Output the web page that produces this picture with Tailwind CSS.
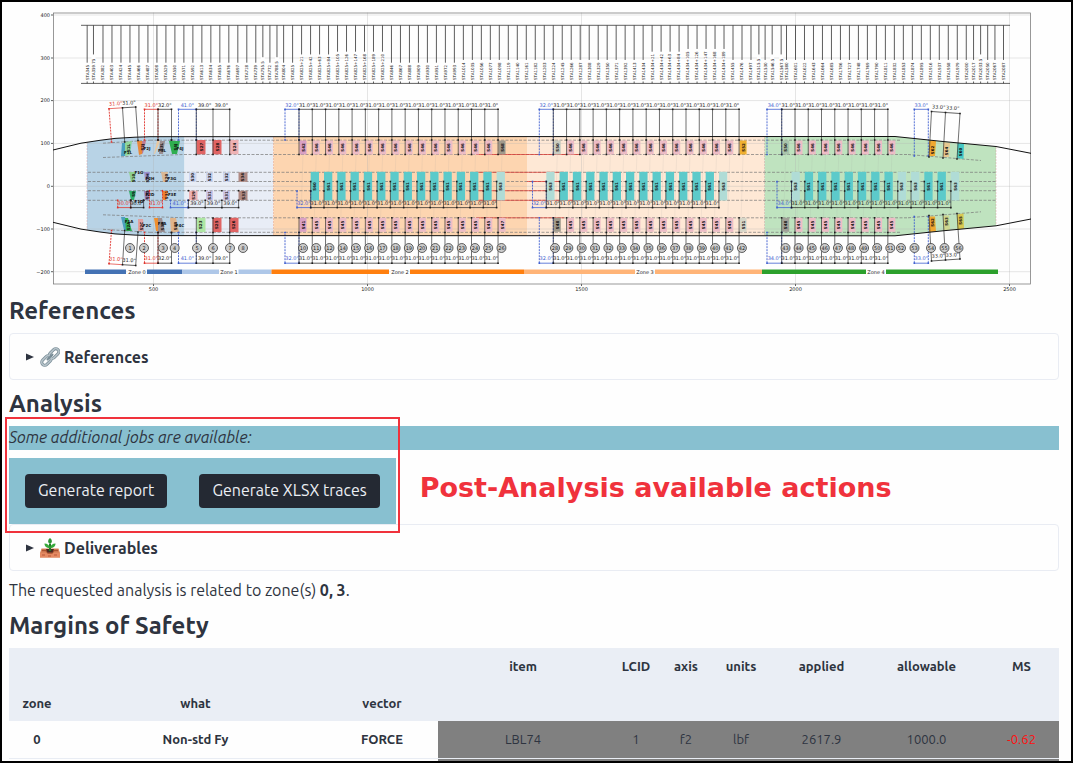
<!DOCTYPE html>
<html lang="en">
<head>
    <meta charset="UTF-8">
    <meta name="viewport" content="width=device-width, initial-scale=1.0">
    <title>Analysis results</title>
    <script src="https://cdn.jsdelivr.net/npm/@tailwindcss/browser@4"></script>
</head>
<body class="h-screen overflow-hidden border-2 border-black bg-[#fefefe] pl-[7px] pr-3 font-['Ubuntu','Noto_Sans',sans-serif] text-base text-[#2e3440]">
    <!-- Station chart -->
    <svg id="chart" class="block w-full" viewBox="18 4 2100 580" role="img" aria-label="Stations and zones" font-family="DejaVu Sans, sans-serif"></svg>

    <main>
        <h2 class="mt-[3px] mb-[6px] text-2xl leading-8 font-bold">References</h2>
        <details class="rounded border border-[#e9ecf3] px-4 pt-[11px] pb-[10px]">
            <summary class="flex cursor-pointer list-none items-center font-bold">
                <svg class="mr-[6px] h-2 w-2" viewBox="0 0 8 8"><path d="M0 .5 8 4 0 7.500z" fill="#2e3440"/></svg>
                <svg class="mr-1 h-5 w-5" viewBox="0 0 20 20" fill="none">
                    <g stroke="#788c96" stroke-width="3">
                        <rect x="8.500" y="3.500" width="11" height="6" rx="3" transform="rotate(-45 14 6.500)"/>
                        <rect x="1" y="10.500" width="11" height="6" rx="3" transform="rotate(-45 6.500 13.500)"/>
                    </g>
                    <g stroke="#b5c2c9" stroke-width="1.500">
                        <rect x="8.500" y="3.500" width="11" height="6" rx="3" transform="rotate(-45 14 6.500)"/>
                        <rect x="1" y="10.500" width="11" height="6" rx="3" transform="rotate(-45 6.500 13.500)"/>
                    </g>
                    <path d="M7.500 12.500l5-5" stroke="#788c96" stroke-width="2" stroke-linecap="round"/>
                </svg>
                References
            </summary>
        </details>

        <h2 class="mt-2 mb-[6px] text-2xl leading-8 font-bold">Analysis</h2>
        <!-- Additional jobs -->
        <section class="relative">
            <p class="mb-2 bg-[#88c0d0] pb-0.5 leading-[22px] italic">Some additional jobs are available:</p>
            <div class="flex items-center">
                <div class="flex shrink-0 gap-8 bg-[#88c0d0] p-4">
                    <button type="button" class="h-[34px] rounded bg-[#242933] px-[13px] pb-0.5 text-[#eceff4]">Generate report</button>
                    <button type="button" class="h-[34px] rounded bg-[#242933] px-[13px] pb-0.5 text-[#eceff4]">Generate XLSX traces</button>
                </div>
                <p class="pb-[6px] pl-6 font-['DejaVu_Sans',sans-serif] text-[27px] leading-8 font-bold whitespace-nowrap text-[#f0323c]">Post-Analysis available actions</p>
            </div>
            <div class="pointer-events-none absolute -top-[9px] -bottom-[9px] -left-1 w-[395px] border-2 border-[#f0323c]"></div>
        </section>

        <details class="rounded border border-[#e9ecf3] px-4 pt-[11px] pb-[10px]">
            <summary class="flex cursor-pointer list-none items-center font-bold">
                <svg class="mr-[6px] h-2 w-2" viewBox="0 0 8 8"><path d="M0 .5 8 4 0 7.500z" fill="#2e3440"/></svg>
                <svg class="mr-1 h-5 w-5" viewBox="0 0 20 20">
                    <path d="M1.500 10.500h17L20 15v4.500H0V15z" fill="#d9825a"/>
                    <path d="M0 15h20v4.500H0z" fill="#e58a63"/>
                    <path d="M2 12.500h4l2 2.500h4l2-2.500h4" fill="none" stroke="#a6502f" stroke-width="1.500"/>
                    <path d="M6 11h8l-1.500 3.500h-5z" fill="#4a2a22"/>
                    <path d="M10 13V6" stroke="#207a28" stroke-width="2"/>
                    <path d="M10 10C6 10 4.500 8 4.500 5.500 7.500 5.500 9.500 7 10 10zM10 10c4 0 5.500-2 5.500-4.500C12.500 5.500 10.500 7 10 10z" fill="#37a93c"/>
                    <path d="M10 6C7.500 4.500 7.500 2 10 0c2.500 2 2.500 4.500 0 6z" fill="#2c9434"/>
                    <path d="M2 17h3M8 18h3M14 17h3" stroke="#b9583a"/>
                </svg>
                Deliverables
            </summary>
        </details>

        <p class="mt-[7px]">The requested analysis is related to zone(s) <b>0, 3</b>.</p>

        <h2 class="mt-2 mb-[6px] text-2xl leading-8 font-bold">Margins of Safety</h2>
        <table class="w-full table-fixed border-collapse text-center text-[13px] leading-5">
            <colgroup>
                <col class="w-[56px]"><col class="w-[261px]"><col class="w-[112px]"><col class="w-[170px]"><col class="w-[56px]">
                <col class="w-[44px]"><col class="w-[66px]"><col class="w-[95px]"><col class="w-[115px]"><col class="w-[75px]">
            </colgroup>
            <thead class="bg-[#eaeef5]">
                <tr class="h-[36px]">
                    <th colspan="3"></th>
                    <th>item</th><th>LCID</th><th>axis</th><th>units</th><th>applied</th><th>allowable</th><th>MS</th>
                </tr>
                <tr class="h-[37px]">
                    <th>zone</th><th>what</th><th>vector</th><th colspan="7"></th>
                </tr>
            </thead>
            <tbody>
                <tr class="h-[37px] border-b border-[#e9edf4]">
                    <th>0</th><th>Non-std Fy</th><th>FORCE</th>
                    <td class="bg-[#808080]">LBL74</td>
                    <td class="bg-[#808080]">1</td>
                    <td class="bg-[#808080]">f2</td>
                    <td class="bg-[#808080]">lbf</td>
                    <td class="bg-[#808080]">2617.9</td>
                    <td class="bg-[#808080]">1000.0</td>
                    <td class="bg-[#808080] text-[#ff1010]">-0.62</td>
                </tr>
                <tr class="h-[37px]">
                    <th colspan="3"></th>
                    <td colspan="7" class="bg-[#808080]"></td>
                </tr>
            </tbody>
        </table>
    </main>

    <script>
        // the drawing uses two user units per chart unit
        const K = 2;
        const out = [];
        const RED = '#e0332c', BLUE = '#3f5fd0', BLACK = '#1c1c1c';

        function line(x1, y1, x2, y2, color, width = 0.7, dash = '') {
            out.push(`<path d="M${x1 * K} ${y1 * K}L${x2 * K} ${y2 * K}" stroke="${color}" stroke-width="${width * K}" stroke-dasharray="${dash || 'none'}" fill="none"/>`);
        }
        function poly(points, fill) {
            out.push(`<polygon points="${points.map(p => p[0] * K + ',' + p[1] * K).join(' ')}" fill="${fill}"/>`);
        }
        function box(x, y, w, h, fill) {
            poly([[x, y], [x + w, y], [x + w, y + h], [x, y + h]], fill);
        }
        function text(s, x, y, size, color = BLACK, rotate = 0, anchor = 'middle', weight = 'normal') {
            out.push(`<text x="${x * K}" y="${y * K}" font-size="${size}" fill="${color}" text-anchor="${anchor}" font-weight="${weight}" transform="rotate(${rotate} ${x * K} ${y * K})">${s}</text>`);
        }
        function dot(x, y, color) {
            box(x - 0.8, y - 0.8, 1.6, 1.6, color);
        }
        function tag(s, x, y) {
            text(s, x + 1.5, y, 8, '#111', -90, 'middle', 'bold');
        }
        const stationX = d => -60.5 + 0.428 * d;

        // zones
        const hullTop = [[53, 150], [81, 143.2], [100, 140.3], [115, 138.4], [135, 137.2], [150, 136.7], [895, 136.5], [943, 141.5], [996, 146.5], [1031, 153.3]];
        const hullBottom = hullTop.map(([x, y]) => [x, 372.3 - y]);
        out.push('<defs><clipPath id="hull"><polygon points="' + hullTop.concat(hullBottom.slice().reverse()).map(p => p[0] * K + ',' + p[1] * K).join(' ') + '"/></clipPath></defs><g clip-path="url(#hull)">');
        [[87, 184.5, '#b8d3e6'], [184.5, 273.5, '#e8edf6'], [273.5, 527, '#fdd5b0'], [527, 764.5, '#fee8d5'], [764.5, 996, '#bfe3bf']]
            .forEach(([a, b, c]) => box(a, 130, b - a, 112, c));
        out.push('</g>');
        line(273.5, 137, 273.5, 235, '#e08a70', 0.4, '4 2');
        line(87, 142, 87, 230, '#d09090', 0.4, '4 2');
        line(996, 147, 996, 225, '#d09090', 0.4, '4 2');
        line(764.5, 137, 764.5, 235, '#d09090', 0.4, '4 2');

        // grid and axes
        [[400, 15], [300, 58], [200, 100.6], [100, 143.4], [0, 186.3], [-100, 229], [-200, 271.7]].forEach(([v, y]) => {
            line(53, y, 1030.5, y, '#b0b0b088', 0.6);
            line(51, y, 53, y, BLACK);
            text(String(v).replace('-', '−'), 50, y + 1.8, 10, BLACK, 0, 'end');
        });
        [500, 1000, 1500, 2000, 2500].forEach(v => {
            const x = stationX(v);
            line(x, 12.5, x, 284, '#b0b0b088', 0.6);
            line(x, 284, x, 286, BLACK);
            text(v, x, 291, 10);
        });
        out.push('<rect x="107" y="26" width="1954" height="542" fill="none" stroke="#777" stroke-width="1.500"/>');

        // station ruler
        const stations = [];
        [345, 359.75, 382, 403, 424, 445, 466, 487, 508, 529, 550, 571, 592, 613, 634, 655, 676, 697, 718, 739, 755.5, 772, 788.5, 804, 825]
            .forEach(s => stations.push(['STA' + s, s]));
        for (let i = 1; i <= 10; i++) stations.push(['STA825+' + 21 * i, 825 + 21 * i]);
        for (let s = 846; s <= 1434; s += 21) stations.push(['STA' + s, s + 210]);
        for (let i = 1; i <= 9; i++) stations.push(['STA1434+' + 21 * i, 1644 + 21 * i]);
        [1455, 1476, 1497, 1515.5, 1530, 1546.5, 1567.5, 1580].forEach(s => stations.push(['STA' + s, s + 399]));
        for (let s = 1601; s <= 2000; s += 21) stations.push(['STA' + s, s + 399]);
        [2017, 2033.5, 2050, 2067, 2087].forEach(s => stations.push(['STA' + s, s + 399]));
        line(81, 25.3, 1010, 25.3, BLACK);
        line(81, 83.4, 1010, 83.4, BLACK);
        stations.forEach(([name, d]) => {
            const x = stationX(d);
            const end = 62.7 - 2.75 * (name.length - 6);
            box(x - 2, end, 4, 80 - end, '#fefefe');
            line(x, 25.3, x, end, '#333', 0.8);
            line(x, 81.5, x, 83.4, '#333', 0.8);
            text(name, x + 1.4, 80, 8, '#111', -90, 'start');
        });

        // dashed stringers
        [172.3, 181.5, 190.7, 200.3].forEach(y => line(88, y, 996, y, '#777', 0.7, '6 3'));
        [[140.2, 1], [232.3, -1]].forEach(([y, s]) => {
            line(103, y + 3 * s, 150, y, '#777', 0.7, '6 3');
            line(150, y, 900, y, '#777', 0.7, '6 3');
        });
        [[154.5, 1], [217.8, -1]].forEach(([y, s]) => {
            line(103, y + 3 * s, 184, y, '#777', 0.7, '6 3');
            line(184, y, 908, y, '#777', 0.7, '6 3');
            line(908, y, 981, y + 6 * s, '#777', 0.7, '6 3');
        });
        [154.5, 172.3, 181.5, 190.7, 200.3, 217.8].forEach((y, i) => line(i === 2 ? 527 : 476, y, i % 2 ? 564 : 580, y, RED, 0.7));

        // row of frames with shared pitch
        function frames(x0, count, step, y, y1, y2, labelY, label) {
            for (let i = 0; i < count; i++) {
                const x = x0 + step * i;
                line(x, y, x, y2, '#333', 0.7);
                dot(x, y, BLACK);
                dot(x, y1, BLACK);
                dot(x, y2, BLACK);
                if (i < count - 1) text(label, x + step / 2, labelY, 10);
            }
            line(x0, y, x0 + step * (count - 1), y, BLACK);
        }
        function offset(x1, x2, y, y2, labelY, label, color = BLUE) {
            line(x1, y, x1, y2, color, 0.9, '4 2');
            line(x2, y, x2, y2, color, 0.9, '4 2');
            line(x1, y, x2, y, color, 0.8);
            [x1, x2].forEach(x => { dot(x, y, color); dot(x, y2, color); });
            text(label, (x1 + x2) / 2, labelY, 10, color);
        }

        // frame shear ties, upper and lower
        function ties(x0, count, first, last, firstLow, lastLow, names) {
            for (let i = 0; i < count; i++) {
                const x = x0 + 13.27 * i;
                const hi = i === 0 ? first : i === count - 1 ? last : '#edbcc6';
                const lo = i === 0 ? firstLow : i === count - 1 ? lastLow : '#edbcc6';
                line(x + 4, 154, x + 2, 218, '#9993', 0.6);
                box(x + 0.5, 140.5, 7, 14, hi);
                box(x + 0.5, 217.8, 7, 14, lo);
                tag(i === 0 ? names[0] : i === count - 1 ? names[1] : 'S46', x + 4, 147.5);
                tag(i === 0 ? names[2] : i === count - 1 ? names[3] : 'S45', x + 4, 225);
            }
        }
        ties(299, 16, '#d9a0c4', '#a09a8c', '#d9a0c4', '#edbcc6', ['S42', 'S68', 'S41', 'S47']);
        ties(553.3, 15, '#c9ccc0', '#f0b030', '#a09a8c', '#d6d6c8', ['S50', 'S52', 'S48', 'S51']);
        ties(781.7, 9, '#a9c4ac', '#edbcc6', '#a0a098', '#edbcc6', ['S50', 'S46', 'S48', 'S45']);

        // floor beams, T = full, L = light
        function beams(x0, kinds, firstName) {
            kinds.split('').forEach((k, i) => {
                const x = x0 + 13.28 * i;
                box(x, 171.8, 8.3, 28.7, k === 'T' ? '#5ccaca' : '#b0dcd6');
                tag(k === 'T' ? (i === 0 ? firstName : 'S61') : 'S63', x + 4.2, 186.5);
            });
        }
        beams(310.7, 'TTTTTTTTTTTTTTL', 'S60');
        beams(546.3, 'LTTTTTTTTTTTTL');
        beams(791.5, 'LTTTTTTTLLTTL');

        // dimensions
        offset(285, 299, 109.3, 140, 106.5, '32.0"');
        frames(299, 16, 13.27, 109.3, 140, 154.5, 106.5, '31.0"');
        offset(539.3, 553.3, 109.3, 154.5, 106.5, '32.0"');
        frames(553.3, 15, 13.27, 109.3, 140, 154.5, 106.5, '31.0"');
        offset(767, 781.7, 109.3, 154.5, 106.5, '34.0"');
        frames(781.7, 9, 13.27, 109.3, 140, 154.5, 106.5, '31.0"');
        offset(285, 299, 263.2, 232.5, 260.3, '32.0"');
        frames(299, 16, 13.27, 263.2, 232.5, 217.8, 260.3, '31.0"');
        offset(539.3, 553.3, 263.2, 217.8, 260.3, '32.0"');
        frames(553.3, 15, 13.27, 263.2, 232.5, 217.8, 260.3, '31.0"');
        offset(767, 781.7, 263.2, 232.5, 260.3, '34.0"');
        frames(781.7, 9, 13.27, 263.2, 232.5, 217.8, 260.3, '31.0"');
        offset(297, 310.7, 207.6, 191, 204.6, '32.0"');
        frames(310.7, 15, 13.28, 207.6, 191, 181.5, 204.6, '31.0"');
        offset(532.5, 546.3, 207.6, 181.5, 204.6, '32.0"');
        frames(546.3, 14, 13.28, 207.6, 191, 181.5, 204.6, '31.0"');
        offset(777, 791.5, 207.6, 181.5, 204.6, '34.0"');
        frames(791.5, 13, 13.28, 207.6, 191, 181.5, 204.6, '31.0"');

        // zone 0 and 1 parts
        [
            [[122, 143], [127, 143], [125, 156], [121, 156], '#4b9fc0'], [[125, 142], [132, 141], [130, 155], [125, 156], '#8fd69b'],
            [[137, 141], [144, 141], [142, 154], [139, 155], '#e8893a'], [[142, 141], [146, 141], [143, 153], [142, 154], '#c07a90'],
            [[157, 141], [160, 141], [155, 154], [154, 154], '#e8c8a0'], [[160, 141], [165, 141], [163, 154], [159, 154], '#9b8f92'],
            [[169, 141], [180, 141], [177, 154], [172, 154], '#2fae50'],
            [[129, 172], [136, 172], [134, 182], [131, 182], '#8ed08e'], [[144, 172], [150, 172], [148, 180], [145, 180], '#9a90d0'],
            [[161, 172], [168, 172], [166, 182], [163, 182], '#d9b896'],
            [[129, 191], [136, 191], [134, 200], [131, 200], '#2fae6a'], [[144, 191], [150, 191], [148, 200], [145, 200], '#9a80b8'],
            [[162, 191], [168, 191], [166, 200], [163, 200], '#ef8030'],
            [[121, 217], [125, 217], [128, 230], [124, 230], '#4b9fc0'], [[125, 218], [128, 218], [132, 231], [126, 231], '#2fae50'],
            [[138, 219], [143, 219], [144, 231], [138, 231], '#e0a0a0'], [[154, 218], [158, 218], [159, 231], [156, 231], '#ef9030'],
            [[158, 218], [162, 218], [165, 232], [158, 232], '#9b8f92'], [[170, 218], [176, 218], [179, 232], [171, 232], '#e0b48a']
        ].forEach(p => poly(p.slice(0, 4), p[4]));
        [['S1L', 128, 148], ['S2J', 142, 147], ['S3L', 161, 147], ['S4J', 175, 147], ['S10', 133, 178], ['S2H', 147, 178], ['S20', 166, 178],
            ['S9', 133, 194], ['S2D', 147, 195], ['S31', 166, 195], ['S2A', 128, 226], ['S2C', 141, 226], ['S3A', 162, 226], ['S4B', 175, 226]].forEach(t => tag(...t));
        [['F1L', 128, 153.5], ['F2J', 147, 149.5], ['F3L', 162, 151.5], ['F4J', 180, 149.5], ['F1G', 139, 173.5], ['F2H', 150, 179.5], ['F3G', 172, 179.5],
            ['F2D', 150, 195.5], ['F3E', 172, 195.5], ['F1D', 139, 202.5], ['F1A', 129, 223], ['F2C', 147, 226.5], ['F3A', 162, 224.5], ['F4C', 180, 226.5]]
            .forEach(([s, x, y]) => text(s, x, y, 8, '#111', 0, 'middle', 'bold'));
        [[196.5, 140, 9, '#e06464', 'S27'], [212.5, 140, 9, '#e06464', 'S28'], [229.5, 140, 9, '#eeb2b4', 'S24'],
            [196.5, 217.8, 9, '#aee6a4', 'S23'], [212.5, 217.8, 9, '#e06464', 'S25'], [229.5, 217.8, 9, '#e06464', 'S26']].forEach(([x, y, w, c, s]) => {
            box(x, y, w, 14.3, c);
            tag(s, x + 4.5, y + 7);
        });
        [[189, 172.3, 7.5, '#cdd6f0', 'S30'], [206, 172.3, 7, '#cdd6f0', 'S32'], [223, 172.3, 7, '#cdd6f0', 'S32'], [238.5, 172.3, 9, '#b08a84', 'S34'],
            [189, 190.7, 8.5, '#eeb2b4', 'S29'], [206, 190.7, 7, '#cdc6e8', 'S31'], [223, 190.7, 7, '#cdc6e8', 'S31'], [238.5, 190.7, 9, '#b08a84', 'S33']].forEach(([x, y, w, c, s]) => {
            box(x, y, w, 9.5, c);
            tag(s, x + w / 2, y + 4.8);
        });

        // zone 0 and 1 dimensions, mirrored about the centre line
        [0, 1].forEach(low => {
            const m = y => low ? 372.5 - y : y;
            const r = low ? -1 : 1;
            line(109, m(108.7), 122.5, m(107.8), RED);
            line(122.5, m(107.8), 135.7, m(107), BLACK);
            line(109, m(108.7), 111.5, m(142), RED, 0.9, '4 2');
            line(122.5, m(107.8), 124.7, m(142), '#333');
            line(135.7, m(107), 138, m(140.5), '#333');
            [[109, 108.7, RED], [111.5, 142, RED], [122.5, 107.8, BLACK], [124.7, 142, BLACK], [135.7, 107, BLACK], [138, 140.5, BLACK]].forEach(([x, y, c]) => dot(x, m(y), c));
            text('31.0"', 115.8, low ? 260.8 : 105.3, 10, RED, -3 * r);
            text('31.0"', 129, low ? 262 : 104.5, 10, BLACK, -3 * r);
            const ly = low ? 260.3 : 106.5;
            offset(144.5, 158, m(109.3), m(140), ly, '31.0"', RED);
            frames(158, 2, 13.5, m(109.3), m(140), m(140), ly, '32.0"');
            offset(178.5, 196.3, m(109.3), m(140), ly, '41.0"');
            frames(196.3, 3, 16.7, m(109.3), m(140), m(154.5), ly, '39.0"');
        });
        offset(117.7, 130.7, 207.6, 200.3, 204.6, '30.0"', RED);
        frames(130.7, 2, 12.9, 207.6, 200.3, 200.3, 204.6, '30.0"');
        offset(149.5, 162.5, 207.6, 190.7, 204.6, '31.0"', RED);
        offset(170.5, 188, 207.6, 200.3, 204.6, '41.0"');
        frames(188.5, 4, 16.7, 207.6, 190.7, 200.3, 204.6, '39.0"');

        // aft tilted frames
        [0, 1].forEach(low => {
            const m = y => low ? 372.5 - y : y;
            const r = low ? -1 : 1;
            poly([[929, m(140.5)], [936, m(141)], [935, m(156)], [929, m(156)]], '#f0a830');
            poly([[943.5, m(142)], [950, m(143)], [949, m(157)], [943, m(157)]], low ? '#cfd890' : '#e6c890');
            poly([[957.5, m(143)], [964, m(144)], [963.5, m(159)], [957, m(158)]], low ? '#d8c850' : '#45c8c4');
            tag('S62', 932, m(150));
            tag(low ? 'S63' : 'S64', 946, m(151));
            tag(low ? 'S65' : 'S60', 960, m(152));
            offset(914.3, 928.3, m(109.3), m(156), low ? 260.3 : 106.5, '33.0"');
            line(931.5, m(111.5), 945.5, m(112.5), BLACK);
            line(945.5, m(112.5), 960, m(113.5), BLACK);
            [[931.5, 111.5, 929, 157], [945.5, 112.5, 943, 158], [960, 113.5, 957, 159]].forEach(([a, b, c, d]) => {
                line(a, m(b), c, m(d), '#333');
                dot(a, m(b), BLACK);
                dot(c, m(d), BLACK);
            });
            text('33.0"', 938.5, low ? 257.5 : 108.7, 10, BLACK, 4 * r);
            text('33.0"', 952.5, low ? 256.5 : 109.7, 10, BLACK, 4 * r);
        });

        // hull outline
        [hullTop, hullBottom].forEach(pts => out.push(`<polyline points="${pts.map(p => p[0] * K + ',' + p[1] * K).join(' ')}" fill="none" stroke="#111" stroke-width="2"/>`));

        // frame numbers
        const numbers = [[1, 130], [2, 144], [3, 163], [4, 174.7], [5, 197], [6, 213], [7, 230], [8, 243]];
        [10, 11, 12, 14, 15, 16, 17, 18, 19, 20, 21, 22, 23, 24, 25, 26].forEach((n, i) => numbers.push([n, 303 + 13.23 * i]));
        for (let n = 28; n <= 42; n++) numbers.push([n, 555 + 13.35 * (n - 28)]);
        for (let n = 43; n <= 51; n++) numbers.push([n, 785.5 + 13.1 * (n - 43)]);
        numbers.push([52, 901], [53, 914.5], [54, 931], [55, 944.5], [56, 958.5]);
        numbers.forEach(([n, x]) => {
            out.push(`<circle cx="${x * K}" cy="496" r="9" fill="#ccc" stroke="#333" stroke-width="1.500"/>`);
            text(n, x, 249.8, 10);
        });

        // zone bar
        [[85, 126, '#4472b4'], [147, 182.3, '#4472b4'], [182.3, 219, '#aec7e8'], [238, 271.5, '#aec7e8'], [271.5, 389, '#ff7f0e'], [410, 524, '#ff7f0e'],
            [524, 635, '#ffb477'], [655, 762, '#ffb477'], [762, 866, '#2ca02c'], [886, 998, '#2ca02c']].forEach(([a, b, c]) => box(a, 269.5, b - a, 4.5, c));
        [137, 229, 400, 645, 876].forEach((x, i) => {
            box(x - 9.5, 269, 19, 6, '#fefefe');
            text('Zone ' + i, x, 273.5, 10);
        });

        document.getElementById('chart').innerHTML = out.join('');
    </script>
</body>
</html>
